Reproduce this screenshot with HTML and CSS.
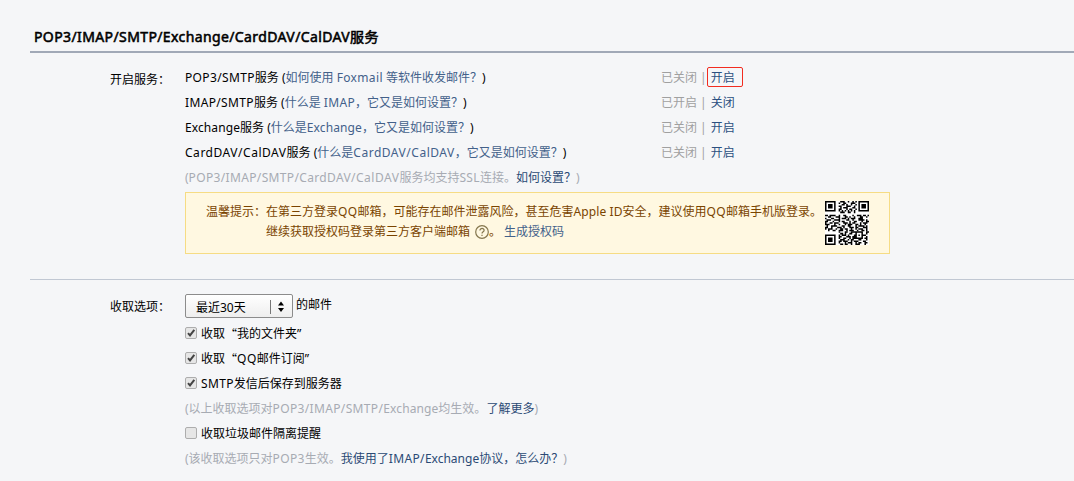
FILE: index.html
```
<!DOCTYPE html>
<html lang="zh-CN">
<head>
<meta charset="utf-8">
<title>POP3/IMAP/SMTP服务</title>
<link rel="stylesheet" href="styles.css">
</head>
<body>
<main class="settings">
  <h1 class="title">POP3/IMAP/SMTP/Exchange/CardDAV/CalDAV服务</h1>
  <section class="group services">
    <div class="label">开启服务：</div>
    <div class="content">
      <div class="row"><p class="name"><span class="en">POP3/SMTP</span>服务 (<a>如何使用 <span class="en">Foxmail</span> 等软件收发邮件？</a>)</p><p class="state">已关闭 | <a class="marked">开启</a></p></div>
      <div class="row"><p class="name"><span class="en">IMAP/SMTP</span>服务 (<a>什么是 <span class="en">IMAP</span>，它又是如何设置？</a>)</p><p class="state">已开启 | <a>关闭</a></p></div>
      <div class="row"><p class="name"><span class="tight">Exchange</span>服务 (<a>什么是<span class="tight">Exchange</span>，它又是如何设置？</a>)</p><p class="state">已关闭 | <a>开启</a></p></div>
      <div class="row"><p class="name"><span class="en wide">CardDAV/CalDAV</span>服务 (<a>什么是<span class="en wide">CardDAV/CalDAV</span>，它又是如何设置？</a>)</p><p class="state">已关闭 | <a>开启</a></p></div>
      <p class="row hint">(<span class="en">POP3/IMAP/SMTP/CardDAV/</span><span class="en wide">CalDAV</span>服务均支持<span class="en">SSL</span>连接。<a>如何设置？</a>)</p>
      <div class="notice">
        <div class="notice-label">温馨提示：</div>
        <div class="notice-text">
          <p>在第三方登录<span class="en">QQ</span>邮箱，可能存在邮件泄露风险，甚至危害<span class="tight">Apple ID</span>安全，建议使用<span class="en">QQ</span>邮箱手机版登录。</p>
          <p class="second">继续获取授权码登录第三方客户端邮箱<svg class="help" viewBox="0 0 14 14"><circle cx="7" cy="7" r="6.3"/><path d="M4.900 5.600c0-3 4.400-2.700 4.200-.2C9 6.900 7 6.700 7 8.600M7 9.700v1.300"/></svg>。<a>生成授权码</a></p>
        </div>
        <svg class="qr" viewBox="0 0 29 29">
          <rect class="paper" width="29" height="29"/>
          <path class="finder" d="M.5.5h6v6h-6zM22.500.5h6v6h-6zM.5 22.500h6v6h-6z"/>
          <path d="M2 2h3v3H2zM24 2h3v3h-3zM2 24h3v3H2z"/>
          <path class="dots" d="M10 .5h3m2 0h1m2 0h1m1 0h1M9 1.500h1m2 0h2m3 0h3M11 2.500h2m1 0h1m2 0h1m2 0h1M9 3.500h2m3 0h3m2 0h1M10 4.500h1m1 0h3m3 0h2M9 5.500h2m3 0h1m1 0h2m2 0h1M9 6.500h1m1 0h1m1 0h1m1 0h1m1 0h1m1 0h1M10 7.500h3m2 0h2m2 0h1"/>
          <path class="dots" d="M0 9.500h2m1 0h4m2 0h1m2 0h2m4 0h1m2 0h3m1 0h2m1 0h1M2 10.500h2m3 0h3m3 0h2m1 0h1m2 0h1m3 0h2m2 0h1M0 11.500h1m3 0h2m3 0h1m1 0h3m1 0h1m1 0h3m2 0h3M1 12.500h3m2 0h4m4 0h2m2 0h1m3 0h4m1 0h1M0 13.500h2m3 0h1m3 0h1m1 0h2m3 0h1m2 0h2m3 0h1m2 0h2M0 14.500h1m2 0h2m1 0h3m3 0h3m1 0h1m1 0h2m3 0h1m1 0h3M0 15.500h3m3 0h1m2 0h1m3 0h1m1 0h3m2 0h2m1 0h1m2 0h1M1 16.500h1m2 0h4m3 0h2m2 0h2m3 0h1m1 0h4m1 0h1M0 17.500h2m2 0h1m3 0h3m1 0h1m3 0h3m1 0h2m3 0h3M0 18.500h1m1 0h3m2 0h1m2 0h2m1 0h2m2 0h1m2 0h1m1 0h3m2 0h1M2 19.500h1m2 0h2m2 0h3m2 0h1m1 0h3m2 0h1m2 0h2m1 0h1"/>
          <path class="dots" d="M9 20.500h1m3 0h2m2 0h8m2 0h2M10 21.500h2m1 0h1m2 0h2m2 0h1m3 0h1m2 0h1M9 22.500h1m1 0h3m1 0h1m3 0h2m1 0h1m1 0h3M9 23.500h2m3 0h3m1 0h3m3 0h1m2 0h1M9 24.500h1m2 0h2m2 0h1m1 0h7m1 0h2M10 25.500h3m2 0h1m1 0h2m3 0h2m3 0h1M9 26.500h2m1 0h3m2 0h1m1 0h3m3 0h2M9 27.500h1m3 0h1m1 0h3m2 0h1m1 0h2m2 0h2M10 28.500h2m1 0h2m2 0h1m2 0h3m3 0h1"/>
        </svg>
      </div>
    </div>
  </section>
  <section class="group options">
    <div class="label">收取选项：</div>
    <div class="content">
      <div class="period"><div class="select"><span class="value">最近30天</span><svg class="arrows" viewBox="0 0 22 16"><path class="bar" d="M.5 1v14"/><path d="M8 6.500l3-4 3 4zM8 9l3 4 3-4z"/></svg></div>的邮件</div>
      <label class="row check"><svg class="box" viewBox="0 0 12 12"><rect x=".5" y=".5" width="11" height="11" rx="1.500"/><path d="M3 6.200l2 2.200L9.300 2.900"/></svg>收取<span class="quote">“</span>我的文件夹”</label>
      <label class="row check"><svg class="box" viewBox="0 0 12 12"><rect x=".5" y=".5" width="11" height="11" rx="1.500"/><path d="M3 6.200l2 2.200L9.300 2.900"/></svg>收取<span class="quote">“</span><span class="en wide">QQ</span>邮件订阅”</label>
      <label class="row check"><svg class="box" viewBox="0 0 12 12"><rect x=".5" y=".5" width="11" height="11" rx="1.500"/><path d="M3 6.200l2 2.200L9.300 2.900"/></svg><span class="en">SMTP</span>发信后保存到服务器</label>
      <p class="row hint">(以上收取选项对<span class="en">POP3/IMAP/SMTP/</span><span class="tight">Exchange</span>均生效。<a>了解更多</a>)</p>
      <label class="row check"><svg class="box" viewBox="0 0 12 12"><rect x=".5" y=".5" width="11" height="11" rx="1.500"/></svg>收取垃圾邮件隔离提醒</label>
      <p class="row hint">(该收取选项只对<span class="en">POP3</span>生效。<a>我使用了<span class="en">IMAP/</span>Exchange协议，怎么办？</a>)</p>
    </div>
  </section>
</main>
</body>
</html>
```
FILE: styles.css
```
* { box-sizing: border-box; }
body { margin: 0; background: #f5f6f8; color: #000; font: 12px/25px "Noto Sans", "Noto Sans CJK SC", sans-serif; }
p, h1 { margin: 0; }
a { color: #1e5494; }
.settings { height: 481px; padding: 24px 0 0 30px; overflow: hidden; white-space: nowrap; }
.title { height: 29px; padding-left: 4px; border-bottom: 2px solid #a1a9b7; font-size: 14px; font-weight: 400; line-height: 26px; letter-spacing: .39px; -webkit-text-stroke: .55px #000; }
.en { letter-spacing: .35px; }
.wide { letter-spacing: .53px; }
.tight { letter-spacing: .1px; }
.group { display: grid; grid-template-columns: 155px 1fr; }
.label { padding-left: 80px; }
.services { height: 227px; padding-top: 12px; border-bottom: 1px solid #c1c8d3; }
.services .label { padding-top: 2px; }
.row { display: flex; align-items: center; height: 25px; white-space: pre; }
.name { width: 476px; }
.name a, .notice a { color: #43618a; }
.state { color: #a0a0a0; }
.state a { display: inline-block; margin-left: 1px; color: #2b4f80; }
.state .marked { height: 20px; line-height: 20px; margin: 0 0 0 -3px; padding: 0 7px 0 3px; border: 1px solid #f22c20; border-radius: 2px; }
.hint { color: #a7abb3; }
.hint a { color: #2b4a75; }
.notice { display: flex; width: 705px; height: 62px; margin-top: 2px; padding: 8px 20px 0; border: 1px solid #f6dc84; background: #fff8e1; color: #7a4400; line-height: 20px; }
.notice-label { width: 60px; padding-top: 1px; }
.notice-text { width: 559px; padding-top: 1px; }
.second { display: flex; align-items: center; }
.second a { margin-left: 3px; }
.help { width: 14px; height: 14px; margin-left: 5px; fill: none; stroke: #85774e; stroke-width: 1.2; }
.qr { width: 44px; height: 44px; }
.paper { fill: #fff; }
.finder, .dots { fill: none; stroke: #000; }
.options { padding-top: 14px; }
.period { display: flex; height: 27px; line-height: 22px; }
.select { display: flex; width: 108px; height: 24px; margin-right: 3px; padding: 0 0 0 10px; border: 1px solid #8c8c8c; border-radius: 2px; background: linear-gradient(#fff, #eee); line-height: 25px; }
.value { width: 74px; }
.arrows { width: 22px; height: 16px; margin-top: 4px; }
.bar { stroke: #777; }
.box { width: 12px; height: 12px; margin: 0 4px 1px 0; }
.box rect { fill: #e6e6e6; stroke: #adadad; }
.box path { fill: none; stroke: #444; stroke-width: 2; }
.quote { font-family: "Noto Sans CJK SC", sans-serif; }
```
